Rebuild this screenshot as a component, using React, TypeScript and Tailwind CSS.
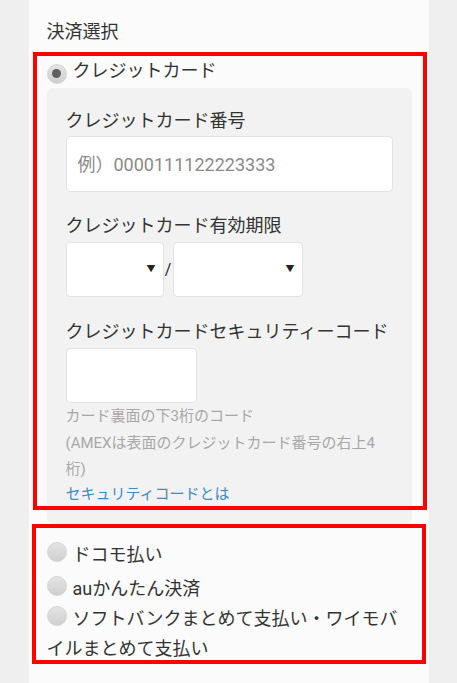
import React from 'react';

const font = { fontFamily: 'Roboto, "Noto Sans CJK JP", sans-serif' };

function Radio({ checked = false }: { checked?: boolean }) {
  return (
    <span className="inline-flex items-center justify-center w-[20px] h-[20px] rounded-full bg-gradient-to-b from-[#e4e4e4] to-[#cfcfcf] border border-[#d6d6d6] align-[-1px] mr-[6px]">
      {checked && <span className="w-[9px] h-[9px] rounded-full bg-[#5f5f5f]" />}
    </span>
  );
}

function Select({ width }: { width: string }) {
  return (
    <div className={`${width} h-[55px] bg-white border border-[#e3e3e3] rounded-[4px] flex items-center justify-end pr-[7px]`}>
      <span className="text-[9px] text-[#222] leading-none">▼</span>
    </div>
  );
}

export default function App() {
  return (
    <div className="min-h-[683px] bg-[#efefef] flex justify-center" style={font}>
      <div className="relative w-[400px] bg-[#fbfbfb] pl-[18px] pr-[17px] pt-[18px] text-[#333]">
        <h2 className="text-[18px] leading-[27px]">決済選択</h2>

        <div className="mt-[12px] text-[18px] leading-[27px]">
          <Radio checked />
          クレジットカード
        </div>

        <div className="mt-[4px] bg-[#f2f2f2] rounded-[6px] pt-[19px] pb-[17px] px-[19px]">
          <p className="text-[18px] leading-[27px]">クレジットカード番号</p>
          <div className="mt-[2px] h-[56px] bg-white border border-[#e3e3e3] rounded-[4px] flex items-center pl-[11px] text-[18px] text-[#8a8a8a]">
            例）0000111122223333
          </div>

          <p className="mt-[20px] text-[18px] leading-[27px]">クレジットカード有効期限</p>
          <div className="mt-[3px] flex items-center">
            <Select width="w-[98px]" />
            <span className="w-[9px] text-center text-[16px] text-[#222]">/</span>
            <Select width="w-[130px]" />
          </div>

          <p className="mt-[21px] text-[18px] leading-[27px]">クレジットカードセキュリティーコード</p>
          <div className="mt-[3px] w-[131px] h-[55px] bg-white border border-[#e3e3e3] rounded-[4px]" />
          <p className="text-[15px] leading-[26.5px] text-[#a8a8a8]">
            カード裏面の下3桁のコード
            <br />
            (AMEXは表面のクレジットカード番号の右上4桁)
          </p>
          <a className="block -mt-[2px] text-[15px] leading-[26px] text-[#3a8cc6]">セキュリティコードとは</a>
        </div>

        <div className="mt-[16px] text-[18px] leading-[30px]">
          <div className="mb-[4px]">
            <Radio />
            ドコモ払い
          </div>
          <div>
            <Radio />
            auかんたん決済
          </div>
          <div>
            <Radio />
            ソフトバンクまとめて支払い・ワイモバイルまとめて支払い
          </div>
        </div>

        <div className="pointer-events-none absolute left-[4px] top-[52px] w-[394px] h-[458px] border-[4px] border-[#ff0000]" />
        <div className="pointer-events-none absolute left-[3px] top-[524px] w-[394px] h-[140px] border-[4px] border-[#ff0000]" />
      </div>
    </div>
  );
}
